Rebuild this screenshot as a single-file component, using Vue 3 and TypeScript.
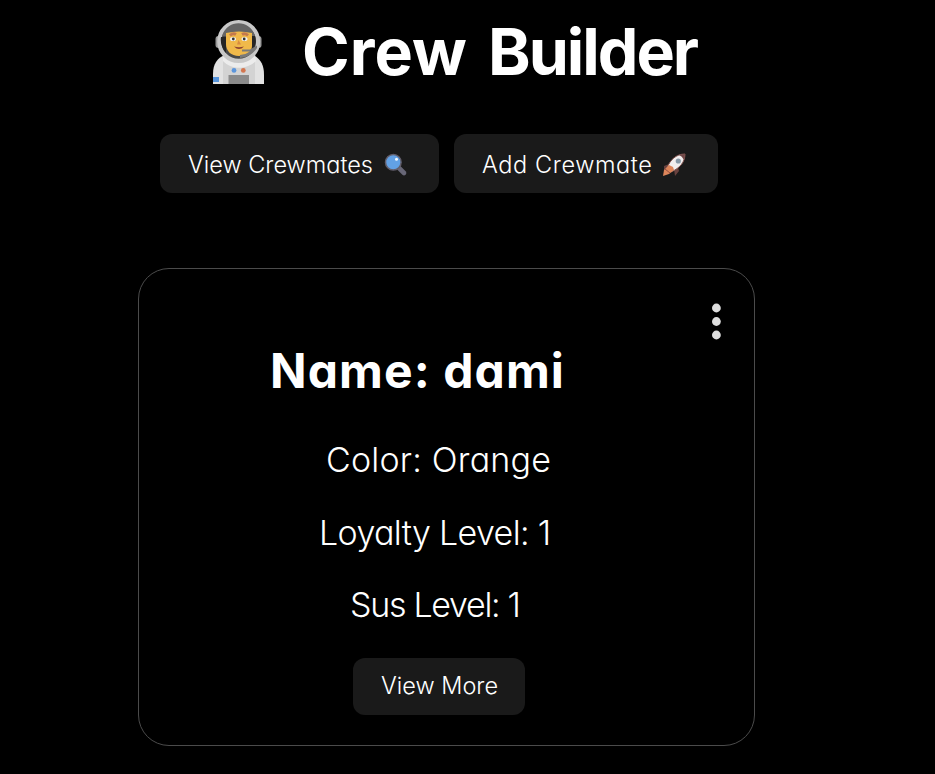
<script setup lang="ts">
interface Crewmate {
  name: string
  color: string
  loyalty: number
  sus: number
}

const crewmate: Crewmate = { name: 'dami', color: 'Orange', loyalty: 1, sus: 1 }
const dots: number[] = [5, 18.5, 32]
</script>

<template>
  <main class="page">
    <h1 class="title">
      <svg class="astronaut" viewBox="0 0 52 64" aria-hidden="true">
        <path d="M0 64V54C0 44 4 38 12 35H40C48 39 51 45 51 55V64Z" fill="#e2e2e2" />
        <path d="M10 64V36H42V64Z" fill="#d3d3d3" />
        <path d="M10 34C18 44 34 44 42 34L43 41C34 50 18 50 10 41Z" fill="#ececec" />
        <rect x="2.5" y="16" width="46" height="12" rx="3" fill="#9a9a9a" />
        <circle cx="25.7" cy="21.5" r="19.4" fill="#484848" stroke="#c8c8c8" stroke-width="4.2" />
        <path d="M9 16C14 -1 37 -1 42 16Z" fill="#666" />
        <path d="M8 17H13V33C9 29 7 22 8 17ZM38 16H42C44 22 42 28 38 32Z" fill="#252525" />
        <path d="M13 13Q26 10 39 13V26C39 32 33 36 26 36C18 36 13 31 13 24Z" fill="#f0b94a" />
        <path d="M17 15.5Q20 12.5 23 14.5M29 14.5Q32 12.5 35 15.5" fill="none" stroke="#c57a4c" stroke-width="2.8" />
        <ellipse cx="20" cy="19" rx="3" ry="2" fill="#f4f4f4" />
        <ellipse cx="31.5" cy="19" rx="3" ry="2" fill="#f4f4f4" />
        <circle cx="20.3" cy="19" r="1.4" fill="#333" />
        <circle cx="31.2" cy="19" r="1.4" fill="#333" />
        <path d="M25.5 20L24 24.5H28Z" fill="#d88b40" />
        <path d="M21 26.5Q26 28 31 26.5Q26 31.5 21 26.5Z" fill="#8c4030" />
        <path d="M29 29.5H37L44 25.5V28Q38 37 27 38V35Q33 34.5 37 31.5H29Z" fill="#7a7a7a" />
        <circle cx="21" cy="50.4" r="2.4" fill="#5c96dc" />
        <circle cx="30.3" cy="50.4" r="2.4" fill="#d3764f" />
        <rect x="15.5" y="55" width="20.5" height="9" fill="#8b8b8b" />
        <rect x="0" y="57" width="6" height="5" fill="#5795dc" />
      </svg>
      <span class="crew">Crew</span>
      <span class="builder">Builder</span>
    </h1>

    <nav class="nav">
      <button class="btn view" type="button">
        <span class="label-view">View Crewmates</span>
        <svg class="icon" viewBox="0 0 24 24" aria-hidden="true">
          <path d="M14 14L20 20" stroke="#686777" stroke-width="4.6" stroke-linecap="round" />
          <circle cx="9.3" cy="9.3" r="7.8" fill="#62a1e5" stroke="#625e6b" stroke-width="1.5" />
          <circle cx="12.5" cy="6.3" r="1.5" fill="#f5faff" />
        </svg>
      </button>
      <button class="btn add" type="button">
        <span class="label-add">Add Crewmate</span>
        <svg class="icon" viewBox="0 0 24 24" aria-hidden="true">
          <path d="M7 11L2 13L2 17L8 16ZM12 16L13 23L17 18L16 14Z" fill="#68413e" />
          <path d="M5 15C8 7 14 1 23 1C23 9 18 15 9 19Z" fill="#f1eeee" stroke="#80504b" stroke-width="1" />
          <path d="M17 2Q20 1 23 1Q23 4 22 7Q20 3 17 2Z" fill="#704746" />
          <circle cx="16.3" cy="8" r="2.6" fill="#8799a8" />
          <path d="M7 12L11 14L12 17L7 21L1 23L2 17Z" fill="#dd855a" />
          <path d="M3 16L8 20" stroke="#934e40" stroke-width="1" />
        </svg>
      </button>
    </nav>

    <section class="card">
      <svg class="menu" viewBox="0 0 10 37" aria-label="Options">
        <circle v-for="y in dots" :key="y" cx="5.4" :cy="y" r="4.4" fill="#dedede" />
      </svg>
      <h2 class="name">Name: {{ crewmate.name }}</h2>
      <p class="line color">Color: {{ crewmate.color }}</p>
      <p class="line loyalty">Loyalty Level: {{ crewmate.loyalty }}</p>
      <p class="line sus">Sus Level: {{ crewmate.sus }}</p>
      <button class="btn more" type="button"><span class="label-more">View More</span></button>
    </section>
  </main>
</template>

<style>
body {
  background: #000;
}
</style>

<style scoped>
.page {
  box-sizing: border-box;
  height: 774px;
  padding: 13px 0 0 138px;
  overflow: hidden;
  background: #000;
  color: #fff;
  font-family: 'Century Gothic', Inter, sans-serif;
  font-feature-settings: 'cv11' 1;
}
.title {
  display: flex;
  height: 78px;
  margin: 0;
  padding-left: 75px;
  font-size: 64.5px;
  font-weight: 700;
  line-height: 78px;
  white-space: nowrap;
}
.astronaut {
  width: 52px;
  height: 64px;
  margin: 7px 37px 0 0;
}
.crew {
  width: 186px;
}
.builder {
  letter-spacing: -2px;
}
.nav {
  display: flex;
  gap: 15px;
  padding: 43px 0 0 22px;
}
.btn {
  box-sizing: border-box;
  display: flex;
  align-items: center;
  padding: 3px 0 0 28px;
  border: 0;
  border-radius: 12px;
  background: #1a1a1a;
  color: #fff;
  font-family: inherit;
  font-feature-settings: inherit;
  font-size: 23.5px;
  font-weight: 350;
  line-height: 28px;
  text-align: left;
  white-space: nowrap;
}
.view {
  width: 279px;
  height: 59px;
}
.add {
  width: 264px;
  height: 59px;
}
.label-view {
  width: 196px;
}
.label-add {
  width: 180px;
  letter-spacing: 0.6px;
}
.icon {
  width: 24px;
  height: 24px;
}
.card {
  box-sizing: border-box;
  position: relative;
  width: 617px;
  height: 478px;
  margin-top: 75px;
  padding-top: 73px;
  border: 1px solid #4b4b4b;
  border-radius: 31px;
}
.menu {
  position: absolute;
  top: 34px;
  right: 33px;
  width: 10px;
  height: 37px;
}
.name {
  margin: 0 0 40px 131px;
  font-size: 48px;
  font-weight: 700;
  line-height: 58px;
  letter-spacing: 1.1px;
  white-space: nowrap;
}
.line {
  margin: 0 0 32.5px;
  font-size: 34px;
  font-weight: 350;
  line-height: 40px;
  white-space: nowrap;
}
.color {
  padding-left: 187px;
  letter-spacing: 0.2px;
}
.loyalty {
  padding-left: 180px;
  letter-spacing: -0.65px;
}
.sus {
  padding-left: 211px;
  letter-spacing: -1.3px;
}
.more {
  width: 172px;
  height: 57px;
  margin-left: 214px;
  padding-top: 0;
}
</style>
